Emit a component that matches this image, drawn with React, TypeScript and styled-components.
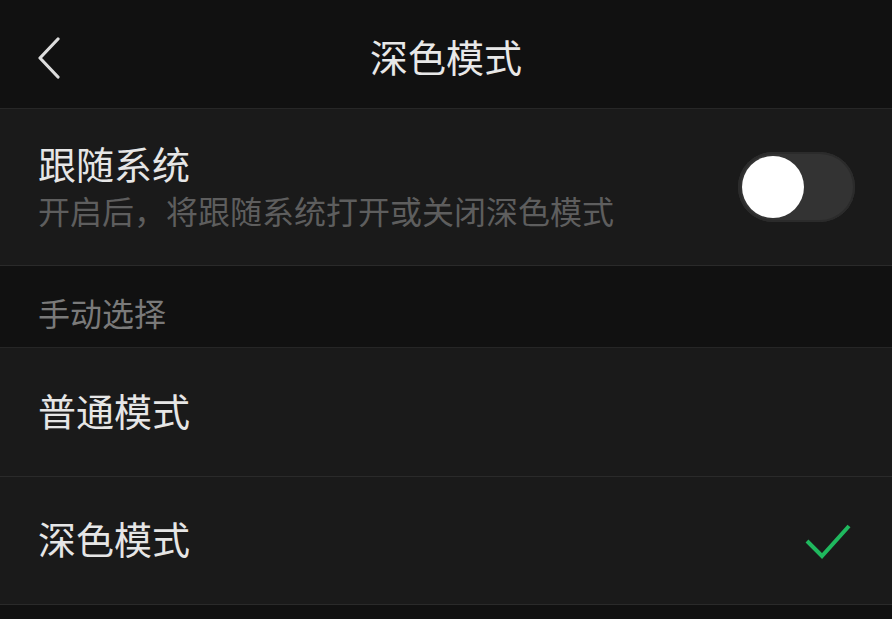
import styled, { createGlobalStyle } from "styled-components";

const GlobalStyle = createGlobalStyle`
  html, body {
    margin: 0;
    padding: 0;
    background: #111111;
  }
  body {
    font-family: "Noto Sans CJK SC", "Noto Sans", sans-serif;
    color: #e6e6e6;
  }
`;

const Page = styled.div`
  width: 892px;
  min-height: 619px;
  background: #111111;
  display: flex;
  flex-direction: column;
`;

const NavBar = styled.div`
  height: 108px;
  display: grid;
  grid-template-columns: 100px 1fr 100px;
  align-items: center;
  border-bottom: 1px solid #272727;
  background: #111111;
`;

const BackButton = styled.button`
  background: none;
  border: none;
  padding: 0 0 0 36px;
  display: flex;
  align-items: center;
  margin-top: 8px;
  cursor: pointer;
`;

const NavTitle = styled.div`
  text-align: center;
  font-size: 38px;
  line-height: 46px;
  margin-top: 4px;
  color: #e8e8e8;
`;

const Cell = styled.div<{ $height: number }>`
  height: ${(p) => p.$height}px;
  box-sizing: border-box;
  padding: 0 37px 0 38px;
  display: flex;
  align-items: center;
  justify-content: space-between;
  background: #1a1a1a;
  border-bottom: 1px solid #2a2a2a;
`;

const TextBlock = styled.div`
  display: flex;
  flex-direction: column;
  gap: 5px;
  margin-bottom: 5px;
`;

const CellTitle = styled.div<{ $lift?: boolean }>`
  font-size: 38px;
  line-height: 46px;
  color: #e6e6e6;
  margin-bottom: ${(p) => (p.$lift ? "5px" : "0")};
`;

const CellDesc = styled.div`
  font-size: 32px;
  line-height: 38px;
  color: #5e5e5e;
`;

const SectionHeader = styled.div`
  height: 82px;
  box-sizing: border-box;
  padding: 27px 38px 0;
  font-size: 32px;
  line-height: 38px;
  color: #7a7a7a;
  border-bottom: 1px solid #262626;
`;

const Track = styled.div<{ $on: boolean }>`
  width: 117px;
  height: 70px;
  border-radius: 35px;
  background: ${(p) => (p.$on ? "#07c160" : "#333333")};
  box-shadow: inset 0 0 0 2px #2b2b2b;
  display: flex;
  align-items: center;
  justify-content: ${(p) => (p.$on ? "flex-end" : "flex-start")};
  padding: 0 4px;
  box-sizing: border-box;
`;

const Knob = styled.div`
  width: 62px;
  height: 62px;
  border-radius: 50%;
  background: #ffffff;
`;

const CheckMark = styled.svg`
  margin-right: 2px;
  margin-top: 4px;
`;

const Check = () => (
  <CheckMark width="48" height="40" viewBox="0 0 48 40" fill="none">
    <path
      d="M2 18 L17 33 L44 3"
      stroke="#1fb85e"
      strokeWidth="4"
      strokeLinecap="butt"
      strokeLinejoin="miter"
    />
  </CheckMark>
);

const Chevron = () => (
  <svg width="26" height="42" viewBox="0 0 26 42" fill="none">
    <path
      d="M22 2 L4 21 L22 40"
      stroke="#dddddd"
      strokeWidth="3.2"
      strokeLinecap="round"
      strokeLinejoin="round"
    />
  </svg>
);

const modes = [
  { label: "普通模式", selected: false, height: 129 },
  { label: "深色模式", selected: true, height: 128 },
];

export default function App() {
  return (
    <Page>
      <GlobalStyle />
      <NavBar>
        <BackButton aria-label="返回">
          <Chevron />
        </BackButton>
        <NavTitle>深色模式</NavTitle>
        <div />
      </NavBar>

      <Cell $height={157}>
        <TextBlock>
          <CellTitle>跟随系统</CellTitle>
          <CellDesc>开启后，将跟随系统打开或关闭深色模式</CellDesc>
        </TextBlock>
        <Track $on={false}>
          <Knob />
        </Track>
      </Cell>

      <SectionHeader>手动选择</SectionHeader>

      {modes.map((m) => (
        <Cell key={m.label} $height={m.height}>
          <CellTitle $lift>{m.label}</CellTitle>
          {m.selected && <Check />}
        </Cell>
      ))}
    </Page>
  );
}
